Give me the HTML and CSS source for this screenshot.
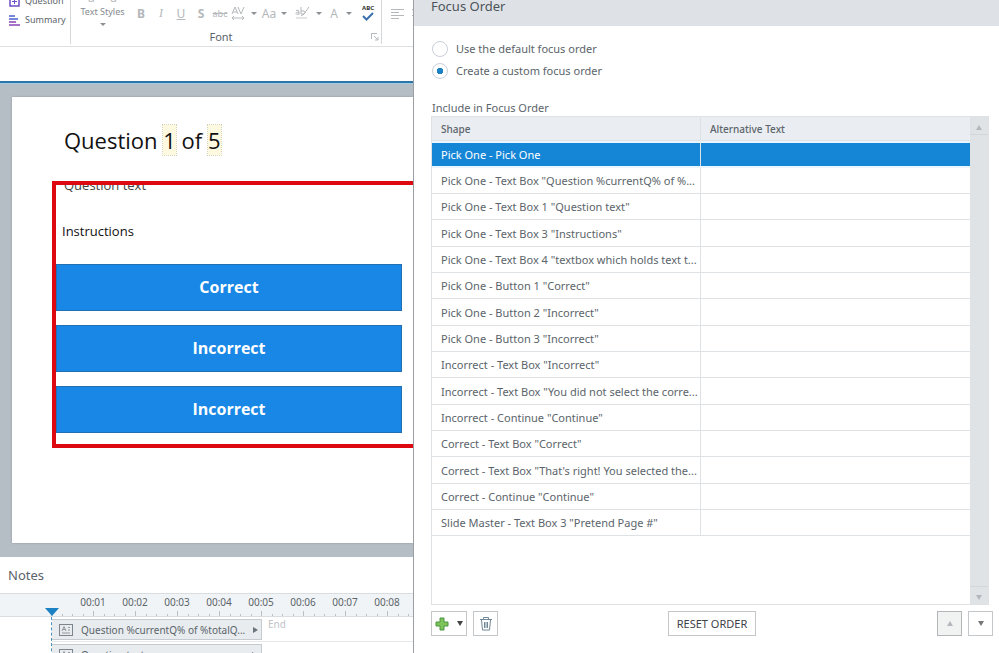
FILE: index.html
```
<!DOCTYPE html>
<html lang="en">
<head>
<meta charset="utf-8">
<title>Focus Order</title>
<link rel="stylesheet" href="styles.css">
</head>
<body>
<div class="app">

  <!-- Slide editor -->
  <main class="editor">
    <div class="ribbon">
      <div class="group group-insert">
        <button class="cmd">
          <svg width="11" height="11" viewBox="0 0 11 11" fill="none" stroke="#6d4cc4"><rect x="1" y="1" width="9" height="9" stroke-width="1.5"/><path d="M3 5.5h5M5.5 3v5"/></svg>
          Question
        </button>
        <button class="cmd">
          <svg width="11" height="11" viewBox="0 0 11 11" stroke-width="1.4"><path d="M0 1h6M0 4h9" stroke="#4a62cf"/><path d="M0 7h7M0 10h11" stroke="#8b45b8"/></svg>
          Summary
        </button>
      </div>

      <div class="group group-font">
        <div class="font-row">
          <button class="styles-btn">
            <span class="sample">a &nbsp; &nbsp; a</span>
            Text Styles
            <i class="caret"></i>
          </button>
          <div class="tools">
            <button><b>B</b></button>
            <button class="italic">I</button>
            <button><u>U</u></button>
            <button><b>S</b></button>
            <button class="small"><s>abc</s></button>
            <button class="narrow" aria-label="Character spacing">
              <svg width="14" height="14" viewBox="0 0 14 14" fill="none" stroke="#b4b8bb"><path d="M1 8L4 1L7 8M2 6h4M7 1L10 8L13 1M1 12h12M3 10L1 12L3 14M11 10L13 12L11 14"/></svg>
            </button>
            <button class="drop" aria-label="Spacing options"><i class="caret"></i></button>
            <button class="case">Aa</button>
            <button class="drop" aria-label="Case options"><i class="caret"></i></button>
            <button class="wide" aria-label="Highlight">
              <svg width="15" height="14" viewBox="0 0 15 14" fill="none" stroke="#b4b8bb"><path d="M1 4.500q3-1 3 1v3M4 6q-3 0-3 1.500t3 .5M6 1v7M6 5q4-1 4 1.500t-4 1.500M14 1L9 8L6 10"/><path d="M1 12h11" stroke="#e3e5e6" stroke-width="2"/></svg>
            </button>
            <button class="drop short" aria-label="Highlight colors"><i class="caret"></i></button>
            <button class="narrow">A</button>
            <button class="drop short" aria-label="Font colors"><i class="caret"></i></button>
            <button class="spell">ABC
              <svg width="12" height="9" viewBox="0 0 12 9" fill="none" stroke="#3a70ae" stroke-width="2"><path d="M1 4L4.500 7.500L11 1"/></svg>
            </button>
          </div>
        </div>
        <div class="group-label">Font
          <svg class="launcher" width="8" height="8" viewBox="0 0 8 8" fill="none" stroke="#b4b8bb"><path d="M.5 6V.5H6M3 3L7 7M7 4v3H4"/></svg>
        </div>
      </div>

      <div class="group group-para">
        <svg width="14" height="10" viewBox="0 0 14 10" stroke="#b4b8bb"><path d="M0 .5h13M0 3.500h8M0 6.500h13M0 9.500h8"/></svg>
        <svg width="14" height="10" viewBox="0 0 14 10" stroke="#b4b8bb"><path d="M0 .5h13M3 3.500h8M0 6.500h13M3 9.500h8"/></svg>
      </div>
    </div>

    <div class="tab-strip"></div>

    <div class="stage">
      <div class="slide">
        <h1>Question <span class="ref">1</span> of <span class="ref">5</span></h1>
        <p class="question">Question text</p>
        <p class="instructions">Instructions</p>
        <div class="answers">
          <button>Correct</button>
          <button>Incorrect</button>
          <button>Incorrect</button>
        </div>
        <div class="marker"></div>
      </div>
    </div>

    <div class="notes">Notes</div>

    <div class="timeline">
      <div class="ruler">
        <div class="times">
          <span>00:01</span><span>00:02</span><span>00:03</span><span>00:04</span><span>00:05</span><span>00:06</span><span>00:07</span><span>00:08</span>
        </div>
        <svg class="ticks" width="100%" height="7">
          <defs>
            <pattern id="second" width="42" height="7" patternUnits="userSpaceOnUse">
              <path d="M.5 0v7M11.500 3v4M21.500 3v4M32.500 3v4" stroke="#b9c0c6"/>
            </pattern>
          </defs>
          <rect width="100%" height="7" fill="url(#second)"/>
        </svg>
        <svg class="playhead" width="14" height="8" viewBox="0 0 14 8"><path d="M0 0h14L7 8z" fill="#1d82c4"/></svg>
      </div>
      <div class="tracks">
        <div class="track">
          <div class="clip">
            <svg width="14" height="12" viewBox="0 0 14 12" fill="none" stroke="#7c858c"><rect x=".5" y=".5" width="13" height="11"/><path d="M3 7L5 2.500L7 7M4 5.500h2M9 3.500h2M9 6h2M3 9h8" stroke-width=".8"/></svg>
            <span>Question %currentQ% of %totalQ...</span>
            <i class="arrow"></i>
          </div>
          <span class="end">End</span>
        </div>
        <div class="track">
          <div class="clip">
            <svg width="14" height="12" viewBox="0 0 14 12" fill="none" stroke="#7c858c"><rect x=".5" y=".5" width="13" height="11"/><path d="M3 7L5 2.500L7 7M4 5.500h2M9 3.500h2M9 6h2M3 9h8" stroke-width=".8"/></svg>
            <span>Question text</span>
            <i class="arrow"></i>
          </div>
        </div>
      </div>
    </div>
  </main>

  <!-- Focus order dialog -->
  <section class="dialog">
    <header>Focus Order</header>
    <div class="content">
      <div class="choices">
        <label><input type="radio" name="order"> Use the default focus order</label>
        <label><input type="radio" name="order" checked> Create a custom focus order</label>
      </div>
      <div class="list-label" id="list-label">Include in Focus Order</div>
      <div class="list">
        <div class="list-body">
          <table aria-labelledby="list-label">
            <thead>
              <tr><th>Shape</th><th>Alternative Text</th></tr>
            </thead>
            <tbody>
              <tr class="selected"><td>Pick One - Pick One</td><td></td></tr>
              <tr><td>Pick One - Text Box "Question %currentQ% of %...</td><td></td></tr>
              <tr><td>Pick One - Text Box 1 "Question text"</td><td></td></tr>
              <tr><td>Pick One - Text Box 3 "Instructions"</td><td></td></tr>
              <tr><td>Pick One - Text Box 4 "textbox which holds text t...</td><td></td></tr>
              <tr><td>Pick One - Button 1 "Correct"</td><td></td></tr>
              <tr><td>Pick One - Button 2 "Incorrect"</td><td></td></tr>
              <tr><td>Pick One - Button 3 "Incorrect"</td><td></td></tr>
              <tr><td>Incorrect - Text Box "Incorrect"</td><td></td></tr>
              <tr><td>Incorrect - Text Box "You did not select the corre...</td><td></td></tr>
              <tr><td>Incorrect - Continue "Continue"</td><td></td></tr>
              <tr><td>Correct - Text Box "Correct"</td><td></td></tr>
              <tr><td>Correct - Text Box "That's right! You selected the...</td><td></td></tr>
              <tr><td>Correct - Continue "Continue"</td><td></td></tr>
              <tr><td>Slide Master - Text Box 3 "Pretend Page #"</td><td></td></tr>
            </tbody>
          </table>
        </div>
        <div class="scrollbar">
          <button aria-label="Scroll up"><i class="tri up"></i></button>
          <button aria-label="Scroll down"><i class="tri"></i></button>
        </div>
      </div>
      <footer>
        <div class="actions">
          <button class="btn add" aria-label="Add">
            <svg width="14" height="14" viewBox="0 0 14 14"><path d="M5 1h4v4h4v4H9v4H5V9H1V5h4z" fill="#7cc45a" stroke="#4c9440"/></svg>
            <i class="tri dark"></i>
          </button>
          <button class="btn" aria-label="Delete">
            <svg width="14" height="15" viewBox="0 0 14 15" fill="none" stroke="#6f8796"><path d="M1 3.500h12M4.500 3.500v-2h5v2M2.500 4l1 10h7l1-10M5.500 6v6M7 6v6M8.500 6v6"/></svg>
          </button>
        </div>
        <button class="btn reset">RESET ORDER</button>
        <div class="actions move">
          <button class="btn disabled" aria-label="Move up"><i class="tri up"></i></button>
          <button class="btn" aria-label="Move down"><i class="tri dim"></i></button>
        </div>
      </footer>
    </div>
  </section>

</div>
</body>
</html>
```

FILE: styles.css
```
:root {
  --text: #5b646a;
  --disabled: #b4b8bb;
  --blue: #1586d6;
  --line: #dfe2e5;
}
* { margin: 0; padding: 0; box-sizing: border-box; }
body {
  font-family: "Noto Sans", "Open Sans", sans-serif;
  font-size: 11px;
  color: var(--text);
  background: #fff;
  overflow: hidden;
}
button {
  font: inherit;
  color: inherit;
  background: none;
  border: 0;
}
svg { display: block; flex: none; }
.app {
  display: grid;
  grid-template-columns: 413fr 586fr;
  height: 100vh;
}
.editor {
  display: flex;
  flex-direction: column;
  min-width: 0;
  overflow: hidden;
}

/* ribbon */
.ribbon {
  display: flex;
  align-items: flex-end;
  height: 47px;
  border-bottom: 1px solid #dddfe1;
  overflow: hidden;
}
.group {
  flex: none;
  display: flex;
  flex-direction: column;
  justify-content: flex-end;
  height: 60px;
  margin-bottom: 2px;
  border-right: 1px solid #d5d8da;
}
.group-insert {
  width: 71px;
  gap: 3px;
  padding: 0 0 16px 9px;
}
.cmd {
  display: flex;
  align-items: center;
  gap: 5px;
  font-size: 9px;
  line-height: 16px;
}
.group-font { width: 311px; }
.font-row {
  display: flex;
  align-items: flex-end;
  padding-bottom: 2px;
}
.styles-btn {
  display: flex;
  flex-direction: column;
  align-items: center;
  width: 60px;
  padding-left: 3px;
  font-size: 9px;
  line-height: 16px;
  color: #858b8f;
}
.sample {
  color: var(--disabled);
  font-size: 12px;
  line-height: 12px;
}
.styles-btn .caret { margin: 3px 0 1px; }
.caret {
  display: inline-block;
  border: 3px solid transparent;
  border-top: 3px solid #8a9094;
  border-bottom: 0;
}
.tools {
  display: flex;
  align-items: center;
  height: 28px;
}
.tools button {
  display: flex;
  justify-content: center;
  align-items: center;
  width: 20px;
  color: var(--disabled);
  font-size: 12px;
}
.tools .italic { font-family: "Liberation Serif", serif; font-style: italic; }
.tools .small { width: 18px; font-size: 9px; }
.tools .narrow { width: 18px; }
.tools .drop { width: 14px; }
.tools .short { width: 12px; }
.tools .case { width: 16px; }
.tools .wide { width: 22px; }
.tools .spell {
  width: 26px;
  flex-direction: column;
  font-size: 6px;
  font-weight: bold;
  line-height: 7px;
  color: #333;
}
.group-label {
  position: relative;
  line-height: 15px;
  text-align: center;
  margin-right: 10px;
}
.launcher {
  position: absolute;
  right: -8px;
  bottom: 3px;
}
.group-para {
  flex-direction: row;
  gap: 7px;
  align-items: flex-end;
  padding: 0 0 25px 9px;
  border: 0;
}
.tab-strip {
  height: 36px;
  border-bottom: 2px solid #2f76a8;
}

/* slide */
.stage {
  flex: 1;
  min-height: 0;
  padding: 13px 0 14px 12px;
  background: #b5bdc5;
  border-top: 1px solid #9fcbe4;
}
.slide {
  position: relative;
  height: 100%;
  padding: 25px 11px 0 44px;
  background: #fff;
  box-shadow: 0 0 2px #8f979e;
  font-family: "Open Sans", sans-serif;
  color: #111;
}
.slide h1 {
  padding-left: 8px;
  font-size: 22px;
  font-weight: normal;
  line-height: 36px;
}
.ref {
  display: inline-block;
  line-height: 30px;
  background: #fdf9e0;
  outline: 1px dotted #d9d3b0;
}
.slide p {
  font-size: 13px;
  line-height: 20px;
}
.slide .question {
  padding: 17px 8px 0;
  color: #444;
}
.instructions { padding: 26px 6px 0; }
.answers {
  display: flex;
  flex-direction: column;
  gap: 14px;
  padding-top: 23px;
}
.answers button {
  height: 47px;
  padding-bottom: 1px;
  background: #1987e5;
  border: 1px solid #2270b4;
  color: #fff;
  font-size: 16px;
  font-weight: bold;
}
.marker {
  position: absolute;
  top: 84px;
  right: 0;
  bottom: 95px;
  left: 40px;
  border: solid #dc0a10;
  border-width: 4px 0 4px 4px;
}

/* notes and timeline */
.notes {
  padding-left: 8px;
  font-size: 13px;
  line-height: 36px;
}
.timeline {
  height: 60px;
  overflow: hidden;
}
.ruler {
  position: relative;
  height: 24px;
  padding-left: 51px;
  background: #f1f4f6;
  border: solid #d9dde0;
  border-width: 1px 0;
  overflow: hidden;
}
.times {
  display: flex;
  padding-left: 21px;
  font-size: 10px;
  line-height: 16px;
}
.times span {
  flex: none;
  width: 42px;
  text-align: center;
}
.times + .ticks { margin-top: 1px; }
.playhead {
  position: absolute;
  left: 45px;
  bottom: 0;
}
.tracks {
  margin-left: 51px;
  border-left: 1px dashed #4c8fba;
}
.track {
  display: flex;
  align-items: flex-start;
  height: 25px;
  padding-top: 2px;
  border-bottom: 1px solid #e6e9eb;
}
.clip {
  flex: none;
  display: flex;
  align-items: center;
  gap: 8px;
  width: 210px;
  height: 21px;
  padding: 0 4px 0 7px;
  background: #e8ecef;
  border: solid #c5cbd0;
  border-width: 1px 1px 1px 0;
  font-size: 10px;
}
.clip span { flex: 1; white-space: nowrap; }
.arrow {
  border: 3px solid transparent;
  border-left: 5px solid #6c757b;
  border-right: 0;
}
.end {
  padding-left: 6px;
  font-size: 10px;
  line-height: 10px;
  color: #c0c3c6;
}

/* dialog */
.dialog {
  display: flex;
  flex-direction: column;
  min-width: 0;
  background: #fff;
  border-left: 1px solid #9b9fa3;
}
.dialog header {
  height: 26px;
  padding-left: 17px;
  background: #dee2e6;
  font-size: 13px;
  line-height: 13px;
  color: #4c5459;
}
.content {
  flex: 1;
  display: flex;
  flex-direction: column;
  min-height: 0;
  padding: 12px 6px 17px 17px;
}
.choices {
  display: flex;
  flex-direction: column;
  padding-left: 1px;
}
.choices label {
  display: flex;
  align-items: center;
  gap: 8px;
  line-height: 22px;
}
.choices input {
  appearance: none;
  width: 16px;
  height: 16px;
  border: 1px solid #c9cfd8;
  border-radius: 50%;
}
.choices input:checked { background: radial-gradient(circle, #1d82c4 3px, #fff 3px); }
.list-label {
  margin-top: 17px;
  padding-left: 1px;
  line-height: 17px;
}
.list {
  flex: 1;
  display: flex;
  min-height: 0;
  margin-right: 4px;
  border: 1px solid var(--line);
}
.list-body {
  flex: 1;
  overflow: hidden;
}
table {
  width: 100%;
  table-layout: fixed;
  border-collapse: separate;
  border-spacing: 0;
}
th {
  height: 24px;
  padding-left: 9px;
  background: #eaedf1;
  border-right: 1px solid var(--line);
  border-bottom: 1px solid var(--line);
  font-size: 10px;
  font-weight: 500;
  text-align: left;
}
td {
  height: 26px;
  padding: 0 0 0 9px;
  border-right: 1px solid var(--line);
  border-bottom: 1px solid var(--line);
  white-space: nowrap;
}
th:last-child, td:last-child { border-right: 0; }
tr:nth-child(3n+1) td { height: 27px; }
.selected td {
  background: var(--blue);
  background-clip: padding-box;
  border-top: 2px solid #e9f6fd;
  border-bottom: 2px solid #e9f6fd;
  color: #fff;
}
.scrollbar {
  display: flex;
  flex-direction: column;
  justify-content: space-between;
  width: 18px;
  background: #dfe3e6;
}
.scrollbar button {
  height: 18px;
  border: solid #d3d7da;
  border-width: 0 0 1px;
}
.scrollbar button:last-child { border-width: 1px 0 0; }
.tri {
  display: inline-block;
  border: 3px solid transparent;
  border-top: 5px solid #b3b8bc;
  border-bottom: 0;
}
.tri.up {
  border-top: 0;
  border-bottom: 5px solid #b3b8bc;
}
.tri.dark { border-top-color: #444; }
.tri.dim { border-top-color: #777; }
footer {
  display: grid;
  grid-template-columns: 1fr auto 1fr;
  padding-top: 6px;
}
.actions {
  display: flex;
  gap: 6px;
}
.move { justify-content: flex-end; }
.btn {
  display: flex;
  justify-content: center;
  align-items: center;
  width: 25px;
  height: 25px;
  border: 1px solid #c3c7ca;
}
.add {
  width: 36px;
  gap: 8px;
}
.reset {
  width: 88px;
  color: #3e4347;
}
.disabled {
  background: #f1f2f2;
  border-color: #b3b6b8;
}
```
